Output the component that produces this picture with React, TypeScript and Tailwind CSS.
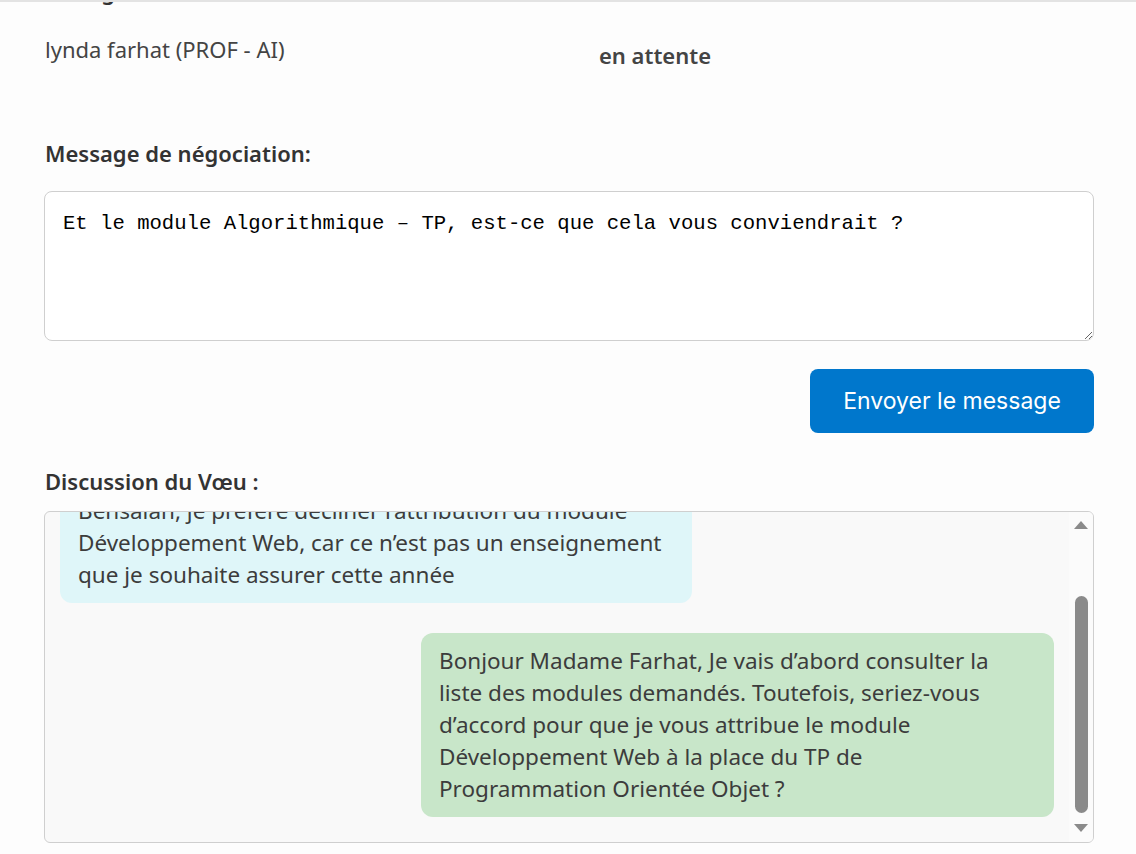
import { useState } from 'react'

const sans = "font-['Noto_Sans','Open_Sans',sans-serif]"

function ScrollBar() {
  return (
    <div className="absolute right-0 top-0 bottom-0 w-[24px] bg-[#fbfbfb] flex flex-col items-center">
      <svg width="14" height="10" viewBox="0 0 14 10" className="mt-[8px] shrink-0">
        <polygon points="7,1 14,9 0,9" fill="#8a8a8a" />
      </svg>
      <div className="flex-1 w-full flex flex-col items-center pt-[66px] pb-[10px]">
        <div className="w-[13px] flex-1 rounded-full bg-[#8a8a8a]" />
      </div>
      <svg width="14" height="10" viewBox="0 0 14 10" className="mb-[9px] shrink-0">
        <polygon points="0,1 14,1 7,9" fill="#8a8a8a" />
      </svg>
    </div>
  )
}

export default function App() {
  const [message, setMessage] = useState(
    'Et le module Algorithmique – TP, est-ce que cela vous conviendrait ?'
  )

  return (
    <div className={`min-h-screen bg-[#fdfdfd] text-[#444] ${sans} relative overflow-hidden`}>
      <div className="absolute top-0 left-0 right-0 h-[2px] bg-[#e3e3e3] z-10" />
      <div className="px-[45px]">
        <div className="flex -mt-[25px] h-[28px] text-[22px] font-semibold text-[#333]">
          <div className="w-[500px]">Enseignant</div>
          <div className="w-[220px] text-center">Statut</div>
        </div>
        <div className="flex items-start text-[22px] mt-[30px]">
          <div className="w-[500px] leading-[32px]">lynda farhat (PROF - AI)</div>
          <div className="w-[220px] text-center font-semibold leading-[32px] mt-[6px]">en attente</div>
        </div>

        <label className="block mt-[66px] text-[22px] font-semibold text-[#333] leading-[32px]">
          Message de négociation:
        </label>
        <textarea
          value={message}
          onChange={(e) => setMessage(e.target.value)}
          className="block mt-[22px] -ml-px w-[1050px] h-[150px] bg-white border border-[#cfcfcf] rounded-[8px] px-[18px] pt-[19px] pb-[14px] font-['Liberation_Mono',monospace] text-[20.6px] leading-[26px] text-black resize-y outline-none"
        />
        <div className="flex justify-end mt-[28px] -mr-[3px]">
          <button className="h-[64px] w-[284px] rounded-[8px] bg-[#0077cc] text-white text-[23px] font-['Inter',sans-serif]">
            Envoyer le message
          </button>
        </div>

        <div className="mt-[32px] text-[22px] font-semibold text-[#333] leading-[32px]">
          Discussion du Vœu :
        </div>
        <div className="relative mt-[14px] -ml-px w-[1050px] h-[332px] border border-[#cfcfcf] rounded-[6px] bg-[#f9f9f9] overflow-hidden">
          <div className="h-full pr-[24px] flex flex-col justify-end">
            <div className="flex flex-col gap-[30px] px-[15px] pb-[25px] text-[22.5px] leading-[32px] text-[#3c3c3c]">
              <div className="self-start w-[632px] rounded-[12px] bg-[#dff6f9] px-[18px] py-[12px]">
                Merci pour votre proposition Monsieur
                <br />
                Bensalah, je préfère décliner l’attribution du module
                <br />
                Développement Web, car ce n’est pas un enseignement
                <br />
                que je souhaite assurer cette année
              </div>
              <div className="self-end w-[633px] rounded-[12px] bg-[#c8e6c9] px-[18px] py-[12px]">
                Bonjour Madame Farhat, Je vais d’abord consulter la
                <br />
                liste des modules demandés. Toutefois, seriez-vous
                <br />
                d’accord pour que je vous attribue le module
                <br />
                Développement Web à la place du TP de
                <br />
                Programmation Orientée Objet ?
              </div>
            </div>
          </div>
          <ScrollBar />
        </div>
      </div>
    </div>
  )
}
